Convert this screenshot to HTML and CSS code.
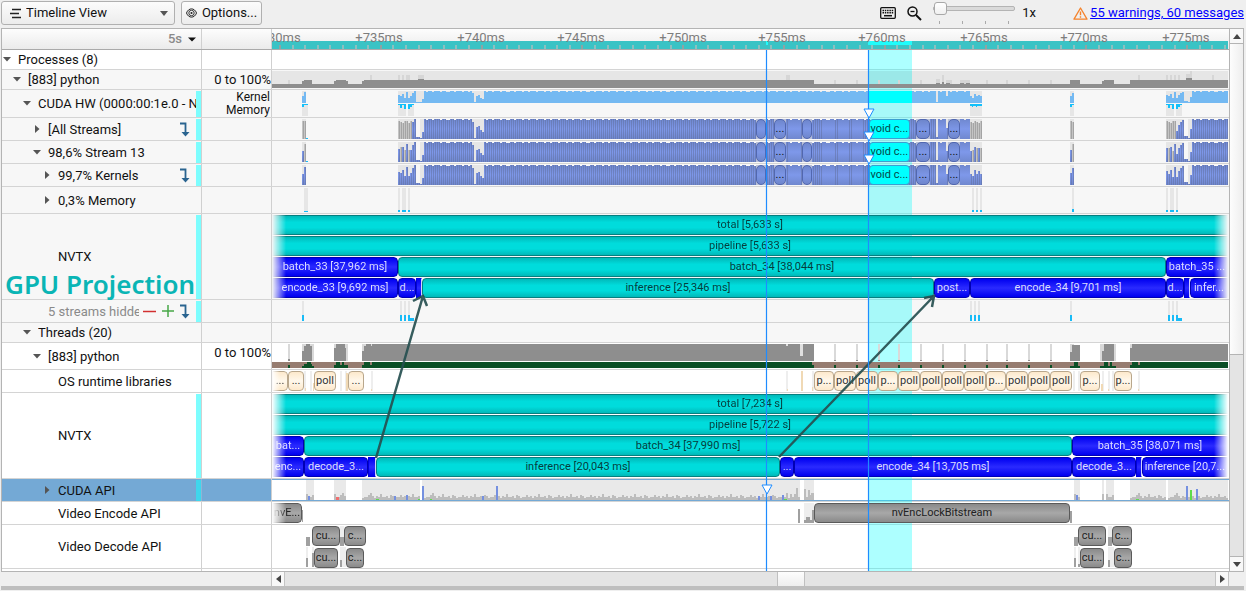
FILE: index.html
```html
<!DOCTYPE html>
<html lang="en">
<head>
<meta charset="utf-8">
<title>Timeline View</title>
<link rel="stylesheet" href="styles.css">
</head>
<body>
<header class="toolbar">
  <div class="view-picker">
    <select aria-label="View"><option>Timeline View</option></select>
    <svg class="view-icon" width="12" height="11" viewBox="0 0 12 11"><path d="M2 1.5h9M0 5.5h9M2 9.5h9" stroke="#222" stroke-width="1.6"/></svg>
    <svg class="view-caret" width="8" height="5" viewBox="0 0 8 5"><path d="M0 0h8L4 5z" fill="#555"/></svg>
  </div>
  <button class="options" type="button">
    <svg width="11" height="10" viewBox="0 0 11 10" fill="none" stroke="#222"><path d="M.5 5C2.500 -.5 8.500 -.5 10.500 5C8.500 10.500 2.500 10.500 .5 5z"/><circle cx="5.500" cy="5" r="2.700" stroke-width=".9"/><circle cx="5.500" cy="5" r="1.100" fill="#222" stroke="none"/></svg>
    Options...
  </button>
  <span class="spacer"></span>
  <button class="icon-btn keys" type="button" aria-label="Keyboard shortcuts">
    <svg width="16" height="12" viewBox="0 0 16 12"><rect x=".7" y=".7" width="14.600" height="10.600" rx="1" fill="none" stroke="#111" stroke-width="1.300"/><path d="M2.500 3.500h11M2.500 5.800h11" stroke="#111" stroke-width="1.500" stroke-dasharray="1.500 .8"/><path d="M4 8.700h8" stroke="#111" stroke-width="1.500"/></svg>
  </button>
  <button class="icon-btn" type="button" aria-label="Zoom out">
    <svg width="15" height="15" viewBox="0 0 15 15" fill="none" stroke="#111"><circle cx="5.500" cy="5.500" r="4.500" stroke-width="1.500"/><path d="M3.500 5.500h4" stroke-width="1.300"/><path d="M9 9l5 5" stroke-width="2"/></svg>
  </button>
  <div class="zoom">
    <input type="range" min="0" max="100" value="0" aria-label="Zoom">
    <div class="zoom-ticks"><i></i><i></i><i></i><i></i></div>
  </div>
  <span class="factor">1x</span>
  <svg class="warn" width="15" height="13" viewBox="0 0 15 13" fill="none" stroke="#f5822a"><path d="M7.500 1L14 12.200H1z" stroke-width="1.300" stroke-linejoin="round"/><path d="M7.500 4.500v3.800M7.500 9.300v1.500" stroke-width="1.400"/></svg>
  <a class="messages" href="#messages">55 warnings, 60 messages</a>
</header>

<main class="timeline">
  <div class="sheet">
    <div class="row head">
      <div class="name"><button class="unit" type="button">5s <svg width="8" height="5" viewBox="0 0 8 5"><path d="M0 0.500h8L4 4.500z" fill="#111"/></svg></button></div>
      <div class="value"></div>
      <div class="ruler" id="ruler"></div>
    </div>
    <div class="rows" id="rows"></div>
  </div>
  <div class="vscroll">
    <button type="button" aria-label="Scroll up"><svg width="8" height="5" viewBox="0 0 8 5"><path d="M0 5h8L4 0z" fill="#444"/></svg></button>
    <div class="vthumb"></div>
    <div class="vtrough"></div>
    <button type="button" aria-label="Scroll down"><svg width="8" height="5" viewBox="0 0 8 5"><path d="M0 0h8L4 5z" fill="#444"/></svg></button>
  </div>
</main>
<div class="hscroll">
  <button type="button" aria-label="Scroll left"><svg width="5" height="8" viewBox="0 0 5 8"><path d="M5 0v8L0 4z" fill="#444"/></svg></button>
  <div class="htrough"></div><div class="hthumb"></div><div class="htrough"></div>
  <button type="button" aria-label="Scroll right"><svg width="5" height="8" viewBox="0 0 5 8"><path d="M0 0v8L5 4z" fill="#444"/></svg></button>
</div>
<footer class="splitter"></footer>
<script src="timeline.js"></script>
</body>
</html>
```
FILE: styles.css
```css
* { box-sizing: border-box; }
body {
  margin: 0;
  background: #efefef;
  color: #111;
  font: 13px/16px Roboto, "Liberation Sans", sans-serif;
}
button { font: inherit; color: inherit; margin: 0; padding: 0; border: 0; background: none; display: flex; align-items: center; justify-content: center; }
svg { display: block; }

.toolbar { display: flex; align-items: center; height: 28px; padding: 0 2px 2px 1px; }
.view-picker { display: grid; align-items: center; width: 174px; height: 24px; margin-right: 6px; }
.view-picker > * { grid-area: 1 / 1; }
.view-picker select {
  appearance: none; width: 100%; height: 24px; padding: 0 24px;
  font: inherit; color: inherit;
  border: 1px solid #b0b0b0; border-radius: 3px;
  background: linear-gradient(#fcfcfc, #ececec);
}
.view-icon { margin-left: 9px; pointer-events: none; }
.view-caret { justify-self: end; margin-right: 7px; pointer-events: none; }
.options { height: 24px; width: 81px; gap: 5px; border: 1px solid #b0b0b0; border-radius: 3px; background: linear-gradient(#fcfcfc, #ececec); }
.spacer { flex: 1; }
.icon-btn { width: 16px; height: 16px; }
.keys { margin-right: 10px; }
.zoom { width: 82px; height: 22px; margin-left: 11px; display: flex; flex-direction: column; justify-content: space-between; }
.zoom input { appearance: none; width: 100%; height: 13px; margin: 0; background: none; }
.zoom input::-webkit-slider-runnable-track { height: 5px; border: 1px solid #b4b4b4; border-radius: 2px; background: #dadada; }
.zoom input::-webkit-slider-thumb { appearance: none; width: 13px; height: 13px; margin-top: -5px; border: 1px solid #a8a8a8; border-radius: 3px; background: linear-gradient(#fff, #f0f0f0); }
.zoom-ticks { display: flex; justify-content: space-between; padding: 0 6px; }
.zoom-ticks i { width: 1px; height: 3px; background: #aaa; }
.factor { margin: 0 37px 0 7px; }
.warn { margin-right: 2px; }
.messages { color: #00f; text-decoration: underline; }

.timeline { display: grid; grid-template-columns: minmax(0, 1fr) 15px; margin: 0 2px 0 1px; border-top: 1px solid #b4b4b4; border-bottom: 1px solid #b4b4b4; }
.sheet { border-left: 1px solid #b4b4b4; min-width: 0; }
.row { display: grid; grid-template-columns: 200px 70px minmax(0, 1fr); border-bottom: 1px solid #d4d4d4; background: #fff; }
.row.shaded { background: #f7f7f7; }
.name, .value { border-right: 1px solid #d0d0d0; min-width: 0; }
.name { display: flex; align-items: center; position: relative; }
.name .toggle { width: 10px; height: 14px; margin-right: 6px; flex: none; }
.name .text { flex: 1; min-width: 0; overflow: hidden; white-space: nowrap; }
.name .mark { align-self: stretch; width: 5px; margin-top: 1px; background: #7dfdfe; }
.name .jump { margin-right: 6px; flex: none; }
.depth-0 { padding-left: 0; }
.depth-1 { padding-left: 10px; }
.depth-2 { padding-left: 20px; }
.depth-3 { padding-left: 30px; }
.depth-4 { padding-left: 40px; }
.muted .text { color: #8a8a8a; flex: 0 0 91px; margin-right: 4px; }
.muted .tools { display: flex; gap: 6px; flex: 1; align-items: center; }
.value { text-align: right; display: flex; align-items: center; justify-content: flex-end; }
.value.top { align-items: flex-start; padding-top: 2px; }
.value.two { font-size: 12px; line-height: 13px; padding-right: 1px; }
.caption { position: absolute; left: 3px; bottom: 1px; font: 600 26px/28px "Noto Sans", sans-serif; color: #0ab5b5; white-space: nowrap; z-index: 4; }

.head { background: linear-gradient(#fdfdfd, #ebebeb); height: 21px; border-bottom-color: #aaa; }
.head .name { justify-content: flex-end; padding-right: 5px; }
.unit { color: #8a8a8a; font-weight: 500; gap: 6px; }
.ruler { display: grid; overflow: hidden; }
.ruler > * { grid-area: 1 / 1; }
.ruler svg { width: 100%; height: 20px; }
.ruler-labels { display: flex; color: #7d7d7d; }
.ruler-labels span { flex: none; text-align: center; white-space: nowrap; line-height: 18px; }

.rows { position: relative; }
.track { display: grid; min-width: 0; align-content: start; overflow: hidden; }
.track > * { grid-area: 1 / 1; position: relative; z-index: 2; min-width: 0; }
.track > svg { width: 100%; }
.lanes { display: grid; gap: 1px; padding-top: 1px; }
.lane { display: flex; height: 20px; min-width: 0; }
.bar {
  flex: none; min-width: 0; overflow: hidden; white-space: nowrap;
  font-size: 11px; line-height: 18px; text-align: center;
  border: 1px solid; border-radius: 4px;
}
.teal { color: #063c3c; border-color: #067f80; background: linear-gradient(#01b9b9, #00dcdc 35%, #00dcdc 65%, #01b9b9); }
.blue { color: #dcdcff; border-color: #0000b4; background: linear-gradient(#0000f0, #2a2aff 50%, #0000f0); }
.thin { border-radius: 0; border-color: #0000e0; border-right-color: #d0d0ff; }
.full { border-radius: 0; border-left: 0; border-right: 0; }
.cream { color: #333; border-color: #b9a78c; background: linear-gradient(#fde9cc, #fff8ec 50%, #fde9cc); }
.gray { color: #222; border-color: #5a5a5a; background: linear-gradient(#8a8a8a, #a8a8a8 50%, #8a8a8a); }
.kernel { color: #111; border-color: #5167b0; background: linear-gradient(#6e86cc, #7c96e6 50%, #6e86cc); border-radius: 5px; }
.picked { color: #064848; border-color: #3b9fd0; background: #00ffff; }
.cut-left { mask-image: linear-gradient(90deg, transparent, #000 14px); border-top-left-radius: 0; border-bottom-left-radius: 0; }
.cut-right { mask-image: linear-gradient(270deg, transparent, #000 14px); border-top-right-radius: 0; border-bottom-right-radius: 0; }
.cut-left.cut-right { mask-image: linear-gradient(90deg, transparent, #000 14px, #000 calc(100% - 14px), transparent); }
.cream.cut-left { mask-image: linear-gradient(90deg, transparent, #000 8px); }

.selected .name, .selected .value { background: #74a9d5; }
.selected .name { border-color: #8fb5d5; }
.selected .mark { background: #3fd6ec; }
.selected .track { border-top: 1px solid #74a9d5; border-bottom: 1px solid #74a9d5; }

.h20 { height: 20px; }
.h23 { height: 23px; }
.h27 { height: 27px; }
.h28 { height: 28px; }
.h23 .text, .h27 .text { padding-top: 2px; }
.h44 { height: 44px; }
.h86 { height: 86px; }
.h2 { height: 2px; border-bottom: 0; }

.overlay { position: absolute; left: 270px; right: 0; top: 0; bottom: 0; pointer-events: none; }
.overlay svg { width: 100%; height: 100%; }
.under { z-index: 1; }
.over { z-index: 3; }

.vscroll { display: flex; flex-direction: column; border-left: 1px solid #b4b4b4; border-right: 1px solid #b4b4b4; }
.vscroll button { height: 14px; flex: none; background: #f8f8f8; }
.vthumb { flex: 312; border: solid #b4b4b4; border-width: 1px 0; background: linear-gradient(90deg, #fdfdfd, #eee); }
.vtrough { flex: 202; background: #e4e4e4; border-bottom: 1px solid #b4b4b4; }
.hscroll { display: flex; height: 14px; margin: 0 17px 0 271px; }
.hscroll button { width: 14px; flex: none; background: #f8f8f8; border-left: 1px solid #c4c4c4; border-right: 1px solid #c4c4c4; }
.htrough { background: #e4e4e4; flex: 492; }
.hthumb { flex: 26; background: linear-gradient(#fdfdfd, #eee); border: solid #c0c0c0; border-width: 0 1px; }
.hthumb + .htrough { flex: 410; }
.splitter { height: 4px; margin: 0 2px 0 1px; background: #bebebe; }
```
FILE: timeline.js
```js
// Horizontal positions are in timeline units: the visible range runs from START to START + SPAN.
const START = 272, SPAN = 957;
const pct = v => (v / SPAN * 100).toFixed(4) + '%';

// Path made of [x, y, width, height] boxes.
const boxes = (list, fill) =>
  `<path fill="${fill}" d="${list.map(([x, y, w, h]) => `M${x - START} ${y}h${w}v${h}h${-w}z`).join('')}"/>`;
const chart = (h, body) =>
  `<svg height="${h}" viewBox="0 0 ${SPAN} ${h}" preserveAspectRatio="none" shape-rendering="crispEdges">${body}</svg>`;

// Bars laid out one after the other: [from, to, label, classes]
function lane(items) {
  let end = START;
  return '<div class="lane">' + items.map(([a, b, text, cls]) => {
    const s = `<span class="bar ${cls}" style="width:${pct(b - a)};margin-left:${pct(a - end)}">${text}</span>`;
    end = b;
    return s;
  }).join('') + '</div>';
}
const lanes = (...l) => `<div class="lanes">${l.map(lane).join('')}</div>`;

const BACK = 'rgba(0,0,0,.065)';
const CYAN = '#18bbf7';

// Load profile, two units per sample, as fractions of 20.
const lead = [13, 12, 15, 9, 18, 9, 12, 17, 20, 2, 2, 1, 7];
function profile() {
  const p = [[302, 11], [304, 18]];
  const solid = (a, b) => { for (let x = a, i = 0; x < b; x += 2, i++) p.push([x, (i * 7 + (i >> 2)) % 10 < 7 ? 20 : 19]); };
  lead.forEach((h, i) => p.push([398 + i * 2, h]));
  solid(424, 470);
  [20, 17, 1, 12, 13, 9, 7].forEach((h, i) => p.push([470 + i * 2, h]));
  solid(484, 936);
  p.push([936, 2]);
  solid(938, 946);
  p.push([946, 11]);
  solid(948, 970);
  [11, 9, 15, 11, 14, 11].forEach((h, i) => p.push([970 + i * 2, h]));
  p.push([1070, 12], [1072, 17]);
  [14, 11, 15, 8, 18, 8, 14, 17, 19, 3, 3, 1, 10].forEach((h, i) => p.push([1166 + i * 2, h]));
  solid(1192, 1228);
  return p;
}
const samples = profile();
const loadBack = [[302, 4], [398, 584], [1070, 4], [1166, 62]];
// Long kernels, drawn without a divider between samples.
const smooth = [[788, 800], [822, 834], [838, 848], [852, 862], [938, 946], [960, 970]];

function kernelChart(mode) {
  const blue = [], dark = [], gray = [], grayDark = [];
  samples.forEach(([x, h]) => {
    const edge = x < 306 || (x >= 398 && x < 412) || (x >= 970 && x < 1074) || (x >= 1166 && x < 1176);
    const isGray = mode === 0 ? edge : mode === 1 ? edge && x % 4 === 0 : false;
    if (mode === 0 && edge) h = Math.max(h, 16 + x % 3);
    if (mode === 1 && isGray) h = Math.min(18, h + 3);
    (isGray ? gray : blue).push([x, 21 - h, 2, h]);
    if (!smooth.some(([a, b]) => x >= a && x < b)) (isGray ? grayDark : dark).push([x + 1, 21 - h, 1, h]);
  });
  const id = 'k' + mode;
  return chart(22,
    `<defs><linearGradient id="${id}" gradientUnits="userSpaceOnUse" x1="0" y1="0" x2="0" y2="22"><stop offset="0" stop-color="#6e86cc"/><stop offset=".5" stop-color="#7e98ea"/><stop offset="1" stop-color="#6e86cc"/></linearGradient></defs>` +
    boxes([[302, 1, 4, 20], [398, 1, 16, 20], [420, 1, 4, 20], [470, 1, 14, 20], [936, 1, 46, 20], [1070, 1, 4, 20], [1166, 1, 18, 20], [1188, 1, 4, 20]], BACK) +
    boxes(blue, `url(#${id})`) + boxes(dark, 'rgba(95,110,155,.5)') +
    boxes(gray, '#c4c4c4') + boxes(grayDark, '#a4a4a4') +
    (mode === 0 || mode === 1 ? boxes([[306, 20, 2, 1]], CYAN) : '') +
    boxes([[756, 1, 10, 20], [774, 1, 12, 20], [802, 1, 10, 20], [916, 1, 14, 20], [948, 1, 12, 20]], '#b9c0d8'));
}
const kernelLane = () => lanes([
  [756, 766, '', 'kernel'], [774, 786, '...', 'kernel'], [802, 812, '', 'kernel'],
  [869, 910, 'void c...', 'picked'], [916, 930, '...', 'kernel'], [948, 960, '...', 'kernel']]);

function hwChart() {
  const sky = samples.map(([x, h]) => {
    const v = Math.max(1, Math.round(h * .6));
    return [x, 13 - v, 2, v];
  });
  return chart(27,
    boxes([...loadBack.map(([x, w]) => [x, 1, w, 12]), [302, 14, 6, 12], [398, 14, 8, 12], [408, 14, 6, 12], [970, 14, 12, 12], [1070, 14, 4, 12], [1166, 14, 8, 12], [1176, 14, 6, 12]], BACK) +
    boxes(sky, '#74b9f2') + boxes([[869, 1, 43, 12]], '#0ff') +
    boxes([[302, 14, 6, 1], [302, 15, 2, 2], [398, 14, 8, 1], [400, 15, 2, 3], [404, 15, 2, 4], [408, 14, 6, 1], [408, 15, 2, 4], [410, 15, 2, 2],
      [970, 14, 12, 2], [972, 16, 1, 1], [976, 16, 1, 1], [1070, 14, 4, 1], [1070, 15, 2, 2],
      [1166, 14, 8, 1], [1168, 15, 2, 3], [1172, 15, 2, 4], [1176, 14, 6, 1], [1176, 15, 2, 4], [1178, 15, 2, 2]], '#12c0fa'));
}

const cpuChart = () => chart(19,
  boxes([[272, 1, 956, 17]], BACK) +
  boxes([[288, 10, 2, 4], [370, 5, 2, 5], [398, 5, 2, 5], [402, 5, 2, 5], [406, 5, 4, 5], [418, 5, 6, 5], [786, 5, 4, 5],
    [834, 10, 2, 4], [856, 10, 2, 4], [878, 10, 2, 4], [898, 10, 2, 4], [920, 10, 2, 4], [936, 9, 4, 5], [942, 5, 2, 9], [946, 10, 6, 4], [960, 10, 10, 4],
    [986, 10, 2, 4], [1006, 10, 2, 4], [1028, 10, 2, 4], [1050, 10, 2, 4], [1138, 5, 2, 5], [1166, 5, 2, 5], [1170, 5, 2, 5], [1174, 5, 2, 5], [1178, 5, 2, 5], [1186, 4, 6, 6], [1190, 1, 2, 4], [1212, 5, 2, 5]], '#d6d6d6') +
  boxes([[272, 14, 956, 4], [302, 11, 10, 4], [304, 10, 8, 2], [334, 11, 14, 4], [336, 10, 10, 2], [362, 11, 4, 4], [364, 10, 450, 5], [418, 9, 6, 2],
    [936, 13, 4, 2], [942, 12, 2, 2], [946, 13, 4, 2], [960, 13, 4, 2], [966, 13, 4, 2], [1070, 10, 10, 4], [1102, 11, 12, 4], [1104, 10, 10, 2], [1130, 10, 98, 5], [1186, 8, 6, 3]], '#8e8e8e'));

const memChart = () => chart(26,
  boxes([304, 398, 402, 404, 408, 972, 976, 980, 1072, 1166, 1170, 1172, 1176].map(x => [x, 1, x === 304 ? 4 : 2, 24]), BACK) +
  boxes([[304, 24, 4, 1], [398, 23, 2, 2], [402, 23, 4, 2], [408, 23, 2, 2], [972, 23, 2, 2], [976, 23, 2, 2], [980, 23, 2, 2], [1072, 22, 2, 3], [1166, 23, 2, 2], [1170, 23, 4, 2], [1176, 23, 2, 2]], CYAN));

const hiddenXs = [302, 400, 404, 408, 970, 974, 978, 1070, 1168, 1172, 1176];
const hiddenChart = () => chart(22,
  boxes(hiddenXs.map(x => [x, 1, 2, 20]), BACK) +
  boxes([...hiddenXs.map(x => [x, 15, 2, 6]), [410, 18, 4, 3], [1178, 18, 4, 3]], CYAN));

const polls = [834, 856, 878, 898, 920, 942, 964, 986, 1006, 1028, 1050];
const threadChart = () => chart(26,
  boxes([[288, 1, 2, 16], [302, 1, 12, 17], [334, 1, 14, 17], [362, 1, 12, 17], [1070, 1, 4, 17], [1100, 1, 16, 17], [1130, 1, 10, 17], ...polls.map(x => [x, 1, 2, 17])], '#d9d9d9') +
  boxes([[288, 16, 2, 2], [302, 8, 10, 10], [304, 3, 8, 15], [306, 1, 4, 17], [334, 5, 12, 13], [336, 1, 9, 17], [362, 8, 4, 10], [364, 3, 8, 15], [366, 1, 5, 17], [372, 1, 442, 17],
    [1070, 9, 10, 9], [1072, 2, 8, 16], [1102, 8, 12, 10], [1104, 1, 10, 17], [1130, 5, 4, 13], [1132, 1, 96, 17], ...polls.map(x => [x, 17, 2, 1])], '#8e8e8e') +
  boxes([[800, 1, 3, 12], [786, 1, 2, 2]], '#e0e0e0') +
  boxes([[272, 19, 956, 6]], '#967c70') +
  boxes([[288, 22, 2, 3], [302, 23, 12, 2], [304, 21, 8, 4], [307, 19, 4, 6], [334, 22, 14, 3], [336, 19, 4, 6], [342, 19, 2, 6], [362, 22, 10, 3], [364, 19, 6, 6], [372, 19, 440, 6], [810, 22, 4, 3],
    [1070, 23, 10, 2], [1074, 19, 4, 6], [1100, 23, 16, 2], [1104, 19, 4, 6], [1110, 19, 2, 6], [1130, 22, 10, 3], [1132, 19, 6, 6], [1140, 19, 88, 6], ...polls.map(x => [x, 22, 2, 3])], '#0b4f26'));

const osChart = () => chart(22,
  boxes([304, 310, 340, 345, 371, 786, 801, 812, 1073, 1078, 1102, 1108, 1112, 1138].map(x => [x, 1, 2, 20]), BACK) +
  boxes([[305, 18, 1, 3], [313, 13, 1, 8], [346, 3, 2, 18], [371, 19, 1, 2], [787, 19, 1, 2], [801, 1, 2, 20], [812, 17, 1, 4], [1101, 14, 2, 7], [1108, 19, 1, 2], [1138, 19, 1, 2]], '#f0d9b5'));

function apiChart() {
  const gray = [], blue = [[422, 6, 2, 14], [496, 6, 2, 14], [1186, 6, 2, 14], [1196, 9, 2, 11], [394, 16, 2, 4], [406, 15, 2, 5], [482, 16, 2, 4], [758, 16, 2, 4], [770, 16, 2, 4], [782, 15, 2, 5], [308, 16, 2, 4], [1076, 15, 2, 5]];
  const zones = [[306, 314], [334, 346], [362, 420], [424, 800], [804, 814], [1074, 1080], [1102, 1104], [1106, 1114], [1130, 1166], [1168, 1228]];
  const heights = [2, 3, 3, 5, 3, 4, 2, 4, 3, 6, 3, 3, 4, 2, 5, 4, 3];
  zones.forEach(([a, b]) => {
    for (let x = a, i = 0; x < b; x += 2, i++) {
      let h = heights[(i + (i >> 4)) % heights.length];
      if (i === 4 || i === 0 && b - a < 20) h += 4;
      gray.push([x, 20 - h, 2, h]);
    }
  });
  gray.push([786, 13, 2, 7], [790, 14, 2, 6], [796, 8, 2, 12], [804, 9, 2, 11], [808, 10, 2, 10], [811, 13, 2, 7]);
  return chart(20,
    boxes([...zones.map(([a, b]) => [a, 0, b - a, 20]), [422, 0, 2, 20]], '#e9e9e9') +
    boxes(gray, '#bdbdbd') + boxes(blue, '#7590e0') +
    boxes([[1190, 10, 2, 10], [376, 19, 3, 1], [418, 19, 2, 1], [430, 19, 2, 1], [784, 19, 3, 1], [1136, 19, 3, 1]], '#5ddc4a') + boxes([[336, 17, 3, 3]], '#f07070'));
}

const encChart = () => chart(22,
  boxes([[804, 1, 10, 20]], BACK) +
  boxes([[302, 8, 1, 12], [798, 7, 2, 14], [804, 18, 2, 3], [806, 15, 2, 6], [808, 15, 2, 6], [810, 18, 2, 3], [812, 8, 2, 13], [1070, 9, 2, 12]], '#a0a0a0'));
const decChart = () => chart(43,
  boxes([[306, 22, 2, 20], [312, 22, 2, 20], [340, 22, 6, 20], [1074, 22, 2, 20], [1078, 22, 2, 20], [1108, 22, 6, 20], [340, 1, 4, 20], [1108, 1, 4, 20]], BACK) +
  boxes([[306, 12, 4, 9], [340, 12, 4, 9], [1074, 12, 4, 9], [1108, 12, 4, 9], [306, 33, 2, 9], [312, 28, 2, 14], [340, 35, 2, 7], [1074, 33, 2, 9], [1078, 39, 2, 3], [1108, 35, 2, 7]], '#a0a0a0'));

const T = 'teal', B = 'blue', C = 'cream', G = 'gray';
const osLane = () => {
  const right = ['p...', 'poll', 'poll', 'p...', 'poll', 'poll', 'poll', 'poll', 'p...', 'poll', 'poll', 'poll'];
  const edges = [814, ...polls, 1072];
  return lanes([[272, 288, '...', C + ' cut-left'], [288, 304, '...', C], [314, 336, 'poll', C], [348, 364, '...', C],
    ...right.map((t, i) => [edges[i], edges[i + 1], t, C]), [1080, 1100, 'p...', C], [1114, 1132, 'p...', C]]);
};

const rows = [
  { h: 20, d: 0, name: 'Processes (8)', open: 1 },
  { h: 20, d: 1, name: '[883] python', open: 1, shaded: 1, value: '0 to 100%', track: cpuChart() },
  { h: 28, d: 2, name: 'CUDA HW (0000:00:1e.0 - NVIDIA)', open: 1, shaded: 1, mark: 1, value: 'Kernel<br>Memory', vcls: 'two', track: hwChart() },
  { h: 23, d: 3, name: '[All Streams]', open: 0, shaded: 1, mark: 1, jump: 1, track: kernelChart(0) + kernelLane() },
  { h: 23, d: 3, name: '98,6% Stream 13', open: 1, shaded: 1, mark: 1, track: kernelChart(1) + kernelLane() },
  { h: 23, d: 4, name: '99,7% Kernels', open: 0, shaded: 1, mark: 1, jump: 1, track: kernelChart(2) + kernelLane() },
  { h: 27, d: 4, name: '0,3% Memory', open: 0, shaded: 1, track: memChart() },
  { h: 86, d: 4, name: 'NVTX', shaded: 1, mark: 1, caption: 'GPU Projection', track: lanes(
    [[272, 1228, 'total [5,633 s]', T + ' full cut-left cut-right']],
    [[272, 1228, 'pipeline [5,633 s]', T + ' full cut-left cut-right']],
    [[272, 398, 'batch_33 [37,962 ms]', B + ' cut-left'], [398, 1166, 'batch_34 [38,044 ms]', T], [1166, 1228, 'batch_35 ...', B + ' cut-right']],
    [[272, 398, 'encode_33 [9,692 ms]', B + ' cut-left'], [398, 416, 'd...', B], [416, 422, '', B + ' thin'], [422, 934, 'inference [25,346 ms]', T], [934, 970, 'post...', B], [970, 1166, 'encode_34 [9,701 ms]', B], [1166, 1184, 'd...', B], [1184, 1190, '', B + ' thin'], [1190, 1228, 'infer...', B + ' cut-right']]) },
  { h: 23, d: 3, name: '5 streams hidden', shaded: 1, mark: 1, jump: 1, muted: 1, track: hiddenChart() },
  { h: 20, d: 2, name: 'Threads (20)', open: 1, shaded: 1 },
  { h: 27, d: 3, name: '[883] python', open: 1, value: '0 to 100%', vcls: 'top', track: threadChart() },
  { h: 23, d: 4, name: 'OS runtime libraries', track: osChart() + osLane() },
  { h: 86, d: 4, name: 'NVTX', mark: 1, track: lanes(
    [[272, 1228, 'total [7,234 s]', T + ' full cut-left cut-right']],
    [[272, 1228, 'pipeline [5,722 s]', T + ' full cut-left cut-right']],
    [[272, 304, 'bat...', B + ' cut-left'], [304, 1072, 'batch_34 [37,990 ms]', T], [1072, 1228, 'batch_35 [38,071 ms]', B + ' cut-right']],
    [[272, 304, 'enc...', B + ' cut-left'], [304, 368, 'decode_3...', B], [368, 376, '', B + ' thin'], [376, 780, 'inference [20,043 ms]', T], [780, 794, '...', B], [794, 1072, 'encode_34 [13,705 ms]', B], [1072, 1136, 'decode_3...', B], [1136, 1142, '', B + ' thin'], [1142, 1228, 'inference [20,7...', B + ' cut-right']]) },
  { h: 23, d: 4, name: 'CUDA API', open: 0, mark: 1, selected: 1, track: apiChart() },
  { h: 23, d: 4, name: 'Video Encode API', track: encChart() + lanes([[272, 302, 'nvE...', G + ' cut-left'], [814, 1070, 'nvEncLockBitstream', G]]) },
  { h: 44, d: 4, name: 'Video Decode API', track: decChart() + lanes(
    [[312, 340, 'cu...', G], [344, 366, 'c...', G], [1078, 1106, 'cu...', G], [1112, 1132, 'c...', G]],
    [[314, 338, 'cu...', G], [346, 364, 'c...', G], [1080, 1104, 'cu...', G], [1114, 1132, 'c...', G]]) },
  { h: 2, d: 0, name: '' },
];

const down = '<svg width="8" height="5" viewBox="0 0 8 5"><path d="M0 0h8L4 4.500z" fill="#555"/></svg>';
const right = '<svg width="5" height="8" viewBox="0 0 5 8"><path d="M0 0v8L4.500 4z" fill="#555"/></svg>';
const jump = '<svg class="jump" width="10" height="15" viewBox="0 0 10 15"><path d="M0 1.500h5.500v10" fill="none" stroke="#2a6490" stroke-width="1.800"/><path d="M1.500 10h8L5.500 14.500z" fill="#2a6490"/></svg>';
const tools = '<span class="tools"><svg width="13" height="13" viewBox="0 0 13 13"><path d="M0 6.500h13" stroke="#d23030" stroke-width="1.500"/></svg><svg width="12" height="12" viewBox="0 0 12 12"><path d="M0 6h12M6 0v12" stroke="#48a848" stroke-width="1.500"/></svg></span>';

document.getElementById('rows').innerHTML = rows.map(r => {
  const toggle = r.open === undefined ? '<span class="toggle"></span>'
    : `<button class="toggle" type="button" aria-label="Toggle ${r.name}" aria-expanded="${!!r.open}">${r.open ? down : right}</button>`;
  return `<div class="row h${r.h}${r.shaded ? ' shaded' : ''}${r.selected ? ' selected' : ''}">` +
    `<div class="name depth-${r.d}${r.muted ? ' muted' : ''}">${r.name ? toggle : ''}<span class="text">${r.name}</span>${r.muted ? tools : ''}${r.jump ? jump : ''}${r.mark ? '<span class="mark"></span>' : ''}${r.caption ? `<span class="caption">${r.caption}</span>` : ''}</div>` +
    `<div class="value ${r.vcls || ''}"><span>${r.value || ''}</span></div><div class="track">${r.track || ''}</div></div>`;
}).join('') +
  `<div class="overlay under"><svg viewBox="0 0 957 521" preserveAspectRatio="none"><rect x="596" width="44" height="521" fill="#00ffff" fill-opacity=".32"/></svg></div>` +
  `<div class="overlay over"><svg viewBox="0 0 957 521" preserveAspectRatio="none" fill="none">
    <g stroke="#264f50" stroke-opacity=".92" stroke-width="2.500"><path d="M104 408L151 246M141 251l10-5l4 10"/><path d="M507 407L662 246M652 248l10-2l-2 11"/></g>
    <path d="M494.500 0v521M596.500 0v521" stroke="#1e8cff" stroke-width="1.200"/>
    <g fill="#fff" stroke="#1e8cff"><path d="M592 59h10l-5 9z"/><path d="M592 82h10l-5 9z"/><path d="M592 105h10l-5 9z"/><path d="M490 435h10l-5 9z"/></g></svg></div>`;

const centers = [277, 379, 481, 581, 683, 782, 882, 984, 1084, 1186];
let end = START;
const labels = centers.map((c, i) => {
  const s = `<span style="width:${pct(60)};margin-left:${pct(c - 30 - end)}">+${730 + i * 5}ms</span>`;
  end = c + 30;
  return s;
}).join('');
const ticks = [], majors = [];
for (let i = 0; i < 76; i++) (i % 8 ? ticks : majors).push([Math.round(279 + i * 12.6), 16, 2, 4]);
document.getElementById('ruler').innerHTML =
  chart(20, boxes([[272, 12, 956, 8]], '#3ac3c5') + boxes([[868, 12, 44, 4], [766, 12, 2, 4]], '#1ffcfc') + boxes(ticks, '#8cc0c0') + boxes(majors, '#8fa3a3')) +
  `<div class="ruler-labels">${labels}</div>`;
```
